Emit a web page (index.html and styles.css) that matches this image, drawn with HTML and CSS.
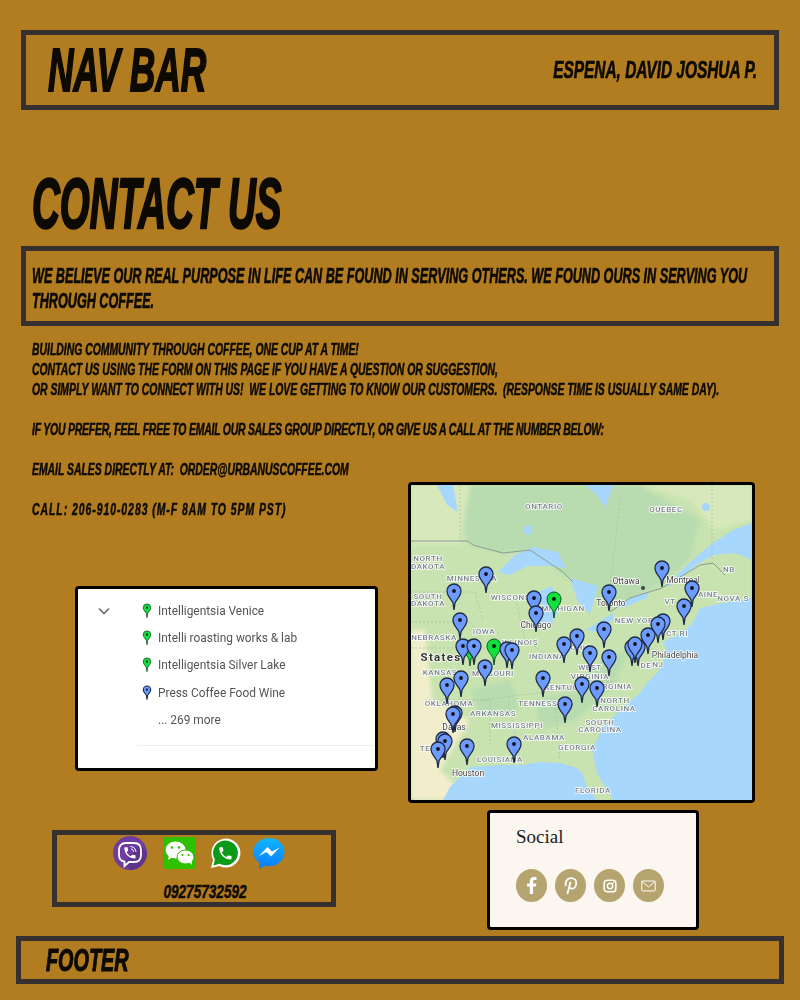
FILE: index.html
```html
<!DOCTYPE html>
<html lang="en">
<head>
<meta charset="utf-8">
<title>Contact Us</title>
<link rel="stylesheet" href="styles.css">
</head>
<body>
<header class="box nav">
  <h2 class="comic nav-title">NAV BAR</h2>
  <p class="comic nav-name">ESPENA, DAVID JOSHUA P.</p>
</header>
<main>
  <h1 class="comic title">CONTACT US</h1>
  <section class="box quote">
    <p class="comic quote-text">WE BELIEVE OUR REAL PURPOSE IN LIFE CAN BE FOUND IN SERVING OTHERS. WE FOUND OURS IN SERVING YOU<br>THROUGH COFFEE.</p>
  </section>
  <p class="comic intro">BUILDING COMMUNITY THROUGH COFFEE, ONE CUP AT A TIME!<br>CONTACT US USING THE FORM ON THIS PAGE IF YOU HAVE A QUESTION OR SUGGESTION,<br>OR SIMPLY WANT TO CONNECT WITH US!&nbsp; WE LOVE GETTING TO KNOW OUR CUSTOMERS.&nbsp; (RESPONSE TIME IS USUALLY SAME DAY).<br><br><span class="tight">IF YOU PREFER, FEEL FREE TO EMAIL OUR SALES GROUP DIRECTLY, OR GIVE US A CALL AT THE NUMBER BELOW:</span><br><br>EMAIL SALES DIRECTLY AT:&nbsp; ORDER@URBANUSCOFFEE.COM<br><br><span class="wide-line">CALL: 206-910-0283 (M-F 8AM TO 5PM PST)</span></p>
  <div class="lower">
    <div class="col-left">
      <div class="shot list-shot">
        <svg class="chevron" viewBox="0 0 12 8"><path d="M1 1.5 L6 6.5 L11 1.5"/></svg>
        <ul class="places">
          <li class="place"><svg class="mini-pin" viewBox="-6 -17 12 18"><path class="pin-green" d="M0 0L-.7-5C-2-7.500-4.500-9-4.500-12A4.500 4.500 0 1 1 4.500-12C4.500-9 2-7.500.7-5Z"/><circle class="pin-dot" cx="0" cy="-12" r="1.300"/></svg>Intelligentsia Venice</li>
          <li class="place"><svg class="mini-pin" viewBox="-6 -17 12 18"><path class="pin-green" d="M0 0L-.7-5C-2-7.500-4.500-9-4.500-12A4.500 4.500 0 1 1 4.500-12C4.500-9 2-7.500.7-5Z"/><circle class="pin-dot" cx="0" cy="-12" r="1.300"/></svg>Intelli roasting works &amp; lab</li>
          <li class="place"><svg class="mini-pin" viewBox="-6 -17 12 18"><path class="pin-green" d="M0 0L-.7-5C-2-7.500-4.500-9-4.500-12A4.500 4.500 0 1 1 4.500-12C4.500-9 2-7.500.7-5Z"/><circle class="pin-dot" cx="0" cy="-12" r="1.300"/></svg>Intelligentsia Silver Lake</li>
          <li class="place"><svg class="mini-pin" viewBox="-6 -17 12 18"><path class="pin-blue" d="M0 0L-.7-5C-2-7.500-4.500-9-4.500-12A4.500 4.500 0 1 1 4.500-12C4.500-9 2-7.500.7-5Z"/><circle class="pin-dot" cx="0" cy="-12" r="1.300"/></svg>Press Coffee Food Wine</li>
          <li class="place more">... 269 more</li>
        </ul>
        <div class="rule"></div>
      </div>
      <div class="box contact">
        <div class="apps">
          <svg class="app viber" viewBox="0 0 34 34"><circle cx="17" cy="17" r="17" fill="#6f3d9f"/><path d="M27 8 L34 17 A17 17 0 0 1 17 34 L11 27 Z" fill="#5f3390"/><path d="M13 7h8c4.500 0 7 2.500 7 7v5c0 4.500-2.500 7-7 7h-5l-4.500 4v-4.300C8 25 6 23 6 19v-5c0-4.500 2.500-7 7-7z" fill="none" stroke="#fff" stroke-width="1.800"/><g transform="translate(9.500 9.500) scale(.62)"><path fill="#fff" d="M6.620 10.790c1.440 2.830 3.760 5.140 6.590 6.590l2.200-2.200c.27-.27.67-.36 1.020-.24 1.120.37 2.330.57 3.570.57.55 0 1 .45 1 1V20c0 .55-.45 1-1 1-9.390 0-17-7.610-17-17 0-.55.45-1 1-1h3.500c.55 0 1 .45 1 1 0 1.250.2 2.450.57 3.570.11.350.03.740-.25 1.020l-2.200 2.200z"/></g><path d="M17.500 10.500c3 0 5.500 2.500 5.500 5.500M18 13c1.500 0 2.500 1.200 2.500 2.800" fill="none" stroke="#fff" stroke-width="1"/></svg>
          <svg class="app wechat" viewBox="0 0 33 32"><rect width="33" height="32" rx="3" fill="#2dc100"/><ellipse cx="12.500" cy="13" rx="10" ry="8.500" fill="#fff"/><path d="M6 18l-1 5 5-3z" fill="#fff"/><ellipse cx="22.500" cy="20" rx="8.500" ry="7" fill="#fff" stroke="#2dc100" stroke-width="1"/><path d="M26 25l3 3-.5-5z" fill="#fff"/><circle cx="9" cy="10.500" r="1.300" fill="#2dc100"/><circle cx="16" cy="10.500" r="1.300" fill="#2dc100"/><circle cx="19.500" cy="18" r="1.100" fill="#2dc100"/><circle cx="25.500" cy="18" r="1.100" fill="#2dc100"/></svg>
          <svg class="app whatsapp" viewBox="0 0 30 30"><path d="M1 29l2-8A14 14 0 1 1 9 27z" fill="#fff"/><path d="M3.300 26.700l1.500-5.900A12 12 0 1 1 9.300 25z" fill="#0d9a18"/><g transform="translate(7 7) scale(.66)"><path fill="#fff" d="M6.620 10.790c1.440 2.830 3.760 5.140 6.590 6.590l2.200-2.200c.27-.27.67-.36 1.020-.24 1.120.37 2.330.57 3.570.57.55 0 1 .45 1 1V20c0 .55-.45 1-1 1-9.390 0-17-7.610-17-17 0-.55.45-1 1-1h3.500c.55 0 1 .45 1 1 0 1.250.2 2.450.57 3.570.11.350.03.740-.25 1.020l-2.200 2.200z"/></g></svg>
          <svg class="app messenger" viewBox="0 0 32 32"><defs><linearGradient id="msg" x1="0" y1="0" x2="0" y2="1"><stop offset="0" stop-color="#12b5ff"/><stop offset="1" stop-color="#0a7cff"/></linearGradient></defs><path d="M16 1C7.200 1 .5 7.300.5 15c0 4.300 2 8 5.500 10.500V32l5.800-3.300c1.400.4 2.800.6 4.200.6 8.800 0 15.500-6.500 15.500-14.300S24.800 1 16 1z" fill="url(#msg)"/><path d="M6 19l8.500-9 4.500 4.500 7.500-4-8.500 9-4.500-4.500z" fill="#fff"/></svg>
        </div>
        <p class="comic phone">09275732592</p>
      </div>
    </div>
    <div class="col-right">
      <div class="shot map-shot">
        <svg class="map" viewBox="411 485 341 315">
          <defs>
            <g id="pb"><path class="pin-blue" d="M0 0L-1-7C-3-11-7-14-7-19A7 7 0 1 1 7-19C7-14 3-11 1-7Z"/><circle class="pin-dot" cx="0" cy="-19" r="1.900"/></g>
            <g id="pg"><path class="pin-green" d="M0 0L-1-7C-3-11-7-14-7-19A7 7 0 1 1 7-19C7-14 3-11 1-7Z"/><circle class="pin-dot" cx="0" cy="-19" r="1.900"/></g>
          </defs>
          <g class="soft">
            <rect class="land" x="411" y="485" width="341" height="315"/>
            <path class="forest" d="M470 485H640L700 520L690 560L660 585L610 610L573 582L530 550L500 553L470 545L460 520Z"/>
            <path class="pale" d="M411 485H470L460 545H411Z"/>
            <path class="pale" d="M640 485H752V520L715 530L690 500Z"/>
            <path class="dry" d="M411 630H425L432 700L470 720L440 770L470 800H411Z"/>
            <path class="forest" d="M535 700L580 690L600 660L630 650L610 690L575 720L540 730Z"/>
            <path class="forest" d="M470 690L510 680L520 710L480 715Z"/>
          </g>
          <g class="soft-water">
            <path class="water" d="M752 598L723 603L700 608L693 622L683 632L663 642L667 653L657 673L647 683L640 693L620 710L603 727L592 750L597 773L613 800H752Z"/>
            <path class="water" d="M597 800L587 787L582 773L577 768L560 763L540 762L523 765L500 765L470 767L450 787L443 800Z"/>
            <path class="water" d="M752 523L733 530L710 545L690 562L667 585L670 586L695 566L713 555L735 553L752 560Z"/>
            <path class="water" d="M498 572L515 555L533 547L558 552L566 568L548 566L528 566L510 575Z"/>
            <path class="water" d="M538 592L552 586L560 608L550 627L541 622L541 605Z"/>
            <path class="water" d="M570 578L598 586L590 614L578 602Z"/>
            <path class="water" d="M585 630L607 617L613 613L613 620L597 632Z"/>
            <path class="water" d="M615 605L633 597L648 592L647 598L623 608Z"/>
            <path class="water" d="M585 485H613L605 508L597 495Z"/>
            <path class="water" d="M437 485H453L458 512L447 505Z"/>
            <ellipse class="water" cx="528" cy="530" rx="4" ry="5"/>
            <circle class="water" cx="706" cy="507" r="4"/>
            <path class="border" d="M411 541H468L473 545L503 553L530 550L563 572L573 582M610 612L630 598L662 588L700 565L713 563L725 575"/>
            <path class="state" d="M460 485V540M620 500L610 585M712 485V560M411 592H475L483 620M411 622H470M470 622L490 650M516 600L525 640L555 660M411 648H500M425 700H490V745M508 700L520 760M555 700L560 760M480 700L545 692L620 680"/>
          </g>
          <g class="labels">
            <text class="lbl" x="544" y="509">ONTARIO</text><text class="lbl" x="666" y="512">QUEBEC</text>
            <text class="lbl" x="729" y="572">NB</text><text class="lbl" x="733" y="601">NOVA S</text>
            <text class="lbl" x="708" y="597">AINE</text><text class="lbl" x="670" y="604">VT</text>
            <text class="lbl" x="428" y="561">NORTH</text><text class="lbl" x="428" y="569">DAKOTA</text>
            <text class="lbl" x="472" y="581">MINNESOTA</text>
            <text class="lbl" x="428" y="599">SOUTH</text><text class="lbl" x="428" y="606">DAKOTA</text>
            <text class="lbl" x="515" y="600">WISCONSIN</text><text class="lbl" x="563" y="611">MICHIGAN</text>
            <text class="lbl" x="484" y="634">IOWA</text><text class="lbl" x="434" y="640">NEBRASKA</text>
            <text class="lbl" x="520" y="645">ILLINOIS</text><text class="lbl" x="637" y="623">NEW YORK</text>
            <text class="lbl" x="677" y="636">CT RI</text><text class="lbl" x="440" y="675">KANSAS</text>
            <text class="lbl" x="493" y="676">MISSOURI</text><text class="lbl" x="547" y="659">INDIANA</text>
            <text class="lbl" x="581" y="650">OHIO</text><text class="lbl" x="646" y="668">DE</text><text class="lbl" x="658" y="667">NJ</text>
            <text class="lbl" x="590" y="670">WEST</text><text class="lbl" x="590" y="679">VIRGINIA</text>
            <text class="lbl" x="613" y="689">VIRGINIA</text><text class="lbl" x="567" y="690">KENTUCKY</text>
            <text class="lbl" x="449" y="706">OKLAHOMA</text><text class="lbl" x="543" y="706">TENNESSEE</text>
            <text class="lbl" x="615" y="703">NORTH</text><text class="lbl" x="614" y="711">CAROLINA</text>
            <text class="lbl" x="493" y="716">ARKANSAS</text><text class="lbl" x="517" y="728">MISSISSIPPI</text>
            <text class="lbl" x="600" y="725">SOUTH</text><text class="lbl" x="600" y="732">CAROLINA</text>
            <text class="lbl" x="544" y="740">ALABAMA</text><text class="lbl" x="577" y="750">GEORGIA</text>
            <text class="lbl" x="425" y="751">TE</text><text class="lbl" x="500" y="762">LOUISIANA</text>
            <text class="lbl" x="593" y="793">FLORIDA</text>
            <text class="city" x="626" y="584">Ottawa</text><text class="city" x="683" y="583">Montreal</text>
            <text class="city" x="611" y="606">Toronto</text><text class="city" x="536" y="628">Chicago</text>
            <text class="city" x="675" y="658">Philadelphia</text><text class="city" x="454" y="730">Dallas</text>
            <text class="city" x="468" y="776">Houston</text><text class="country" x="441" y="661">States</text>
          </g>
          <g>
            <circle class="city-dot" cx="643" cy="588" r="2"/>
            <use href="#pb" x="486" y="593"/><use href="#pb" x="454" y="610"/><use href="#pb" x="534" y="617"/>
            <use href="#pb" x="536" y="632"/><use href="#pg" x="554" y="618"/><use href="#pb" x="460" y="639"/>
            <use href="#pb" x="609" y="611"/><use href="#pb" x="662" y="587"/><use href="#pb" x="692" y="607"/>
            <use href="#pb" x="684" y="625"/><use href="#pb" x="577" y="655"/><use href="#pg" x="470" y="666"/>
            <use href="#pb" x="463" y="665"/><use href="#pb" x="474" y="665"/><use href="#pg" x="494" y="665"/>
            <use href="#pb" x="507" y="668"/><use href="#pb" x="512" y="669"/><use href="#pb" x="485" y="686"/>
            <use href="#pb" x="543" y="697"/><use href="#pb" x="461" y="697"/><use href="#pb" x="447" y="704"/>
            <use href="#pb" x="564" y="663"/><use href="#pb" x="590" y="672"/><use href="#pb" x="609" y="676"/>
            <use href="#pb" x="604" y="648"/><use href="#pb" x="582" y="703"/><use href="#pb" x="597" y="707"/>
            <use href="#pb" x="565" y="723"/><use href="#pb" x="455" y="732"/><use href="#pb" x="453" y="733"/>
            <use href="#pb" x="443" y="758"/><use href="#pb" x="445" y="760"/><use href="#pb" x="438" y="768"/>
            <use href="#pb" x="467" y="765"/><use href="#pb" x="514" y="763"/><use href="#pb" x="632" y="666"/>
            <use href="#pb" x="638" y="666"/><use href="#pb" x="635" y="663"/><use href="#pb" x="648" y="654"/>
            <use href="#pb" x="663" y="640"/><use href="#pb" x="658" y="643"/>
          </g>
        </svg>
      </div>
      <div class="shot social">
        <h3 class="social-title">Social</h3>
        <div class="social-row">
          <span class="badge"><svg class="glyph big" viewBox="0 0 20 20"><path class="fill" d="M11.500 18V11h2.700l.4-3h-3.100V6.300c0-.9.3-1.500 1.500-1.500h1.700V2.100C14.400 2 13.400 2 12.300 2 10 2 8.400 3.400 8.400 6v2H5.800v3h2.600v7z"/></svg></span>
          <span class="badge"><svg class="glyph big" viewBox="0 0 20 20"><path class="line" d="M5.500 10.500C4.300 7 6.500 3 10.500 3c3.300 0 5 2.200 5 4.700 0 3-1.800 5.300-4 5.300-1.300 0-2.200-.9-2-2"/><path class="line" d="M10 6.500L7 18"/></svg></span>
          <span class="badge"><svg class="glyph" viewBox="0 0 20 20"><rect class="line" x="3.500" y="3.500" width="13" height="13" rx="3.500"/><circle class="line" cx="10" cy="10" r="3"/><circle class="fill" cx="13.800" cy="6.200" r=".9"/></svg></span>
          <span class="badge"><svg class="glyph wide" viewBox="0 0 20 20"><rect class="line thin" x="2.500" y="4.500" width="15" height="11" rx="1"/><path class="line thin" d="M2.500 5L10 11L17.500 5"/></svg></span>
        </div>
      </div>
    </div>
  </div>
</main>
<footer class="box foot">
  <p class="comic foot-text">FOOTER</p>
</footer>
</body>
</html>
```

FILE: styles.css
```css
* { box-sizing: border-box; }
html, body { margin: 0; padding: 0; }
body { width: 800px; height: 1000px; background: #b27c20; overflow: hidden; padding-top: 30px; }
h1, h2, h3, p, ul { margin: 0; padding: 0; font-weight: normal; }

.box { border: 5px solid #363030; }
.comic {
  font-family: "Liberation Sans Narrow", "Liberation Sans", sans-serif;
  font-weight: bold;
  font-style: italic;
  color: #0d0a04;
  white-space: nowrap;
  -webkit-text-stroke: .5px #0d0a04;
}

.nav { margin: 0 21px; height: 80px; display: flex; justify-content: space-between; align-items: center; padding: 0 17px 0 22px; }
.nav-title { font-size: 62px; line-height: 70px; transform: scaleX(.57); transform-origin: left center; -webkit-text-stroke-width: 2px; width: 160px; }
.nav-name { font-size: 24px; line-height: 26px; transform: scaleX(.643); transform-origin: right center; -webkit-text-stroke-width: .7px; }

.title { font-size: 70px; line-height: 70px; margin: 59px 0 0 32px; height: 77px; transform: scaleX(.55); transform-origin: left center; -webkit-text-stroke-width: 2.500px; }

.quote { margin: 0 21px; height: 80px; padding: 12px 6px; }
.quote-text { font-size: 22px; line-height: 25px; transform: scaleX(.574); transform-origin: left top; -webkit-text-stroke-width: .7px; }

.intro { margin: 14px 0 0 32px; height: 180px; font-size: 16px; line-height: 20px; transform: scaleX(.65); transform-origin: left top; }
.tight { letter-spacing: -.3px; }
.wide-line { letter-spacing: 1.500px; }

.lower { display: grid; grid-template-columns: 408px 347px; margin-top: -38px; }

.shot { border: 3px solid #000; border-radius: 4px; }

.list-shot { margin: 104px 0 0 75px; width: 303px; height: 185px; background: #fff; position: relative; padding: 8px 0 0 64px; }
.chevron { position: absolute; left: 20px; top: 18px; width: 12px; height: 8px; fill: none; stroke: #707070; stroke-width: 1.700; }
.places { list-style: none; filter: blur(.3px); }
.place { font-family: Roboto, sans-serif; font-size: 11.900px; color: #555; height: 27.300px; display: flex; align-items: center; gap: 6px; }
.more { padding-left: 16px; }
.mini-pin { width: 10px; height: 16px; flex: none; }
.rule { position: absolute; left: 59px; right: 0; top: 156px; height: 1px; background: #eee; }

.map-shot { width: 347px; height: 321px; overflow: hidden; background: #c5e0ae; }
.map { display: block; width: 341px; height: 315px; filter: blur(.35px); }
.soft { filter: blur(2px); }
.land { fill: #c8e3b0; }
.forest { fill: #b8dcb0; }
.pale { fill: #d7e9bb; }
.dry { fill: #f2eecb; }
.water { fill: #a7d7fd; }
.border { fill: none; stroke: #8c9a96; stroke-width: 1; }
.state { fill: none; stroke: #9fb5a2; stroke-width: .6; stroke-dasharray: 2 2; }
.lbl { font-family: Roboto, sans-serif; font-size: 8px; font-weight: 500; letter-spacing: .6px; fill: #79838c; stroke: #fff; stroke-width: 1.500; paint-order: stroke; text-anchor: middle; }
.city { font-family: Roboto, sans-serif; font-size: 8.500px; fill: #444; stroke: #fff; stroke-width: 1.500; paint-order: stroke; text-anchor: middle; }
.country { font-family: Roboto, sans-serif; font-size: 11.500px; font-weight: 700; letter-spacing: 1.300px; fill: #333; stroke: #fff; stroke-width: 1.500; paint-order: stroke; text-anchor: middle; }
.city-dot { fill: #444; }
.pin-blue { fill: #6e9bff; stroke: #1f2a44; stroke-width: 1.300; }
.pin-green { fill: #10e23c; stroke: #14522a; stroke-width: 1; }
.pin-dot { fill: #111; }

.contact { margin: 59px 0 0 52px; width: 284px; height: 77px; }
.apps { display: flex; align-items: center; height: 36px; }
.app { display: block; flex: none; }
.viber { width: 34px; height: 34px; margin-left: 56px; }
.wechat { width: 33px; height: 32px; margin-left: 16px; }
.whatsapp { width: 31px; height: 31px; margin-left: 14px; }
.messenger { width: 32px; height: 32px; margin-left: 12px; }
.phone { font-size: 18px; line-height: 22px; margin-top: 10px; text-align: center; transform: translateX(11px) scaleX(.755); }

.social { margin: 7px 0 0 79px; width: 212px; height: 120px; background: #fbf7f0; padding: 13px 0 0 26px; }
.social-title { font-family: "Liberation Serif", serif; font-size: 19px; line-height: 22px; color: #222; }
.social-row { display: flex; gap: 8px; margin-top: 21px; }
.badge { width: 31px; height: 33px; border-radius: 50%; background: #b5a46f; display: flex; align-items: center; justify-content: center; }
.glyph { width: 18px; height: 18px; }
.glyph.big { width: 21px; height: 21px; }
.glyph.wide { width: 19px; }
.fill { fill: #fff; }
.line { fill: none; stroke: #fff; stroke-width: 1.700; }
.thin { stroke-width: 1.100; }

.foot { margin: 6px 16px 0; height: 48px; padding-left: 25px; display: flex; align-items: center; }
.foot-text { font-size: 32px; line-height: 38px; transform: scaleX(.62); transform-origin: left center; -webkit-text-stroke-width: 1.100px; }
```
